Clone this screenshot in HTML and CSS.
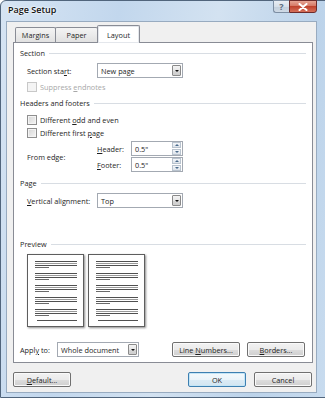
FILE: index.html
```html
<!DOCTYPE html>
<html lang="en">
<head>
    <meta charset="UTF-8">
    <title>Page Setup</title>
    <link rel="stylesheet" href="styles.css">
</head>
<body>
    <div class="window">
        <div class="titlebar">
            <span class="title">Page Setup</span>
            <div class="caption">
                <span class="cap-help">?</span>
                <span class="cap-close">
                    <svg width="10" height="8" viewBox="0 0 10 8"><path d="M1.5 1 L8.5 7 M8.5 1 L1.5 7" stroke="#fff" stroke-width="2" stroke-linecap="round"/></svg>
                </span>
            </div>
        </div>

        <div class="client">
            <div class="tabs">
                <div class="tab tab-margins">Margins</div>
                <div class="tab tab-paper">Paper</div>
                <div class="tab tab-layout active">Layout</div>
            </div>

            <div class="panel">
                <div class="group-title">Section</div>
                <div class="row row-start">
                    <span class="label">Section sta<u>r</u>t:</span>
                    <div class="combo combo-wide">
                        <span class="combo-text">New page</span>
                        <span class="combo-btn"><i class="arrow"></i></span>
                    </div>
                </div>
                <div class="row check-row row-suppress disabled">
                    <span class="check"></span>
                    <span>Suppress <u>e</u>ndnotes</span>
                </div>

                <div class="group-title gt-headers">Headers and footers</div>
                <div class="row check-row row-odd">
                    <span class="check"></span>
                    <span>Different <u>o</u>dd and even</span>
                </div>
                <div class="row check-row row-first">
                    <span class="check"></span>
                    <span>Different first <u>p</u>age</span>
                </div>
                <div class="edge">
                    <span class="label">From edge:</span>
                    <div class="edge-fields">
                        <div class="edge-row">
                            <span class="sublabel"><u>H</u>eader:</span>
                            <div class="spin">
                                <span class="spin-text">0.5"</span>
                                <span class="spin-btns"><i class="up"></i><i class="down"></i></span>
                            </div>
                        </div>
                        <div class="edge-row">
                            <span class="sublabel"><u>F</u>ooter:</span>
                            <div class="spin">
                                <span class="spin-text">0.5"</span>
                                <span class="spin-btns"><i class="up"></i><i class="down"></i></span>
                            </div>
                        </div>
                    </div>
                </div>

                <div class="group-title gt-page">Page</div>
                <div class="row row-valign">
                    <span class="label"><u>V</u>ertical alignment:</span>
                    <div class="combo combo-wide">
                        <span class="combo-text">Top</span>
                        <span class="combo-btn"><i class="arrow"></i></span>
                    </div>
                </div>

                <div class="group-title gt-preview">Preview</div>
                <div class="preview">
                    <div class="sheet">
                        <div class="para"><i></i><i class="lt"></i><i></i><i class="short"></i></div>
                        <div class="para"><i></i><i class="lt"></i><i></i><i class="short"></i></div>
                        <div class="para"><i></i><i class="lt"></i><i></i><i class="short"></i></div>
                        <div class="para"><i></i><i class="lt"></i><i></i><i class="short"></i></div>
                        <div class="para"><i></i><i class="lt"></i><i></i><i class="short"></i></div>
                        <div class="para last"><i></i></div>
                    </div>
                    <div class="sheet">
                        <div class="para"><i></i><i class="lt"></i><i></i><i class="short"></i></div>
                        <div class="para"><i></i><i class="lt"></i><i></i><i class="short"></i></div>
                        <div class="para"><i></i><i class="lt"></i><i></i><i class="short"></i></div>
                        <div class="para"><i></i><i class="lt"></i><i></i><i class="short"></i></div>
                        <div class="para"><i></i><i class="lt"></i><i></i><i class="short"></i></div>
                        <div class="para last"><i></i></div>
                    </div>
                </div>

                <div class="row row-apply">
                    <span class="label-apply">Appl<u>y</u> to:</span>
                    <div class="combo combo-apply">
                        <span class="combo-text">Whole document</span>
                        <span class="combo-btn"><i class="arrow"></i></span>
                    </div>
                    <button class="btn btn-lines"><span>Line <u>N</u>umbers...</span></button>
                    <button class="btn btn-borders"><span><u>B</u>orders...</span></button>
                </div>
            </div>

            <div class="footer">
                <button class="btn"><span><u>D</u>efault...</span></button>
                <span class="spacer"></span>
                <button class="btn btn-ok"><span>OK</span></button>
                <button class="btn"><span>Cancel</span></button>
            </div>
        </div>
    </div>
</body>
</html>
```

FILE: styles.css
```css
body {
    margin: 0;
    width: 325px;
    height: 400px;
    overflow: hidden;
    background-color: #ffffff;
    font-family: "Open Sans", "Liberation Sans", sans-serif;
    font-size: 7.3px;
    color: #1e1e1e;
}

u {
    text-decoration-thickness: 1px;
    text-underline-offset: 1px;
}

.window {
    width: 332px;
    height: 398px;
    box-sizing: border-box;
    border: 1px solid #51657c;
    border-radius: 6px 6px 0 0;
    padding-left: 5px;
    background: linear-gradient(100deg, #d6e4f3 0%, #c2d7ed 30%, #d3e2f1 55%, #bcd3ea 80%, #c9dcef 100%);
    display: flex;
    flex-direction: column;
}

/* title bar */

.titlebar {
    width: 311px;
    height: 20px;
    display: flex;
    justify-content: space-between;
    align-items: flex-start;
}

.title {
    padding: 3px 0 0 2px;
    font-size: 9px;
    font-weight: 600;
    line-height: 12px;
    color: #111;
    text-shadow: 0 0 3px #ffffff, 0 0 2px #ffffff;
}

.caption {
    display: flex;
    margin-top: -1px;
}

.cap-help {
    width: 16px;
    height: 13px;
    box-sizing: border-box;
    border: 1px solid #7d8ea3;
    border-right: none;
    border-radius: 0 0 0 3px;
    background: linear-gradient(#e9eef4 0%, #d6dfe9 50%, #c2cedb 51%, #cfdae6 100%);
    color: #5a6a7c;
    font-size: 9px;
    font-weight: bold;
    line-height: 11px;
    text-align: center;
}

.cap-close {
    width: 28px;
    height: 13px;
    box-sizing: border-box;
    border: 1px solid #6d2b2b;
    border-radius: 0 0 3px 0;
    background: linear-gradient(#e6a595 0%, #d67865 45%, #c0432e 50%, #d5705a 100%);
    display: flex;
    align-items: center;
    justify-content: center;
}

/* client area */

.client {
    width: 311px;
    height: 372px;
    box-sizing: border-box;
    border: 1px solid #98abc0;
    background-color: #f0f0f0;
    padding-top: 3px;
    display: flex;
    flex-direction: column;
}

.tabs {
    display: flex;
    align-items: flex-end;
    height: 17px;
    margin-left: 8px;
}

.tab {
    height: 15px;
    box-sizing: border-box;
    border: 1px solid #898c95;
    border-bottom: none;
    border-radius: 2px 2px 0 0;
    background: linear-gradient(#f4f4f4, #e1e1e1);
    display: flex;
    align-items: center;
    justify-content: center;
    margin-right: -1px;
}

.tab-margins { width: 41px; }
.tab-paper { width: 43px; }

.tab.active {
    width: 43px;
    height: 18px;
    margin-bottom: -1px;
    background: #ffffff;
    position: relative;
    z-index: 1;
    box-shadow: inset 0 0 0 1px #e4e7ec;
}

.panel {
    margin: 0 3px 0 6px;
    border: 1px solid #898c95;
    background-color: #ffffff;
    padding: 4px 6px 5px 6px;
}

.group-title {
    height: 12px;
    display: flex;
    align-items: center;
    gap: 4px;
}

.group-title::after {
    content: "";
    flex: 1;
    height: 1px;
    background-color: #d8dde3;
}

.gt-headers { margin-top: 5px; }
.gt-page { margin-top: 5px; }
.gt-preview { margin-top: 30px; }

.row {
    display: flex;
    align-items: center;
    padding-left: 7px;
}

.row-start { margin-top: 4px; height: 15px; }
.row-valign { margin-top: 4px; height: 15px; }

.label {
    width: 70px;
    flex-shrink: 0;
}

.check-row {
    height: 10px;
    gap: 3px;
}

.row-suppress { margin-top: 4px; }
.row-odd { margin-top: 6px; }
.row-first { margin-top: 3px; }

.check {
    width: 10px;
    height: 10px;
    box-sizing: border-box;
    border: 1px solid #8f8f8f;
    background: linear-gradient(135deg, #d4d4d4 0%, #f6f6f6 100%);
    box-shadow: inset 0 0 0 1px #f4f4f4;
}

.disabled {
    color: #a8a8a8;
}

.disabled .check {
    border-color: #c8c8c8;
    background: #f4f4f4;
    box-shadow: none;
}

/* combo boxes */

.combo {
    height: 15px;
    box-sizing: border-box;
    border: 1px solid #a3a9b2;
    background-color: #ffffff;
    display: flex;
}

.combo-wide { width: 86px; }
.combo-apply { width: 82px; }

.combo-text {
    flex: 1;
    padding-left: 3px;
    display: flex;
    align-items: center;
}

.combo-btn {
    width: 9px;
    margin: 1px;
    box-sizing: border-box;
    border: 1px solid #8a8a8a;
    border-radius: 1px;
    background: linear-gradient(#f3f3f3 0%, #e6e6e6 50%, #d6d6d6 51%, #cfcfcf 100%);
    display: flex;
    align-items: center;
    justify-content: center;
}

.arrow {
    width: 0;
    height: 0;
    border-left: 2px solid transparent;
    border-right: 2px solid transparent;
    border-top: 2px solid #111;
}

/* from edge */

.edge {
    margin-top: 3px;
    padding-left: 7px;
    display: flex;
    align-items: center;
}

.edge-fields {
    display: flex;
    flex-direction: column;
    gap: 1px;
}

.edge-row {
    display: flex;
    align-items: center;
    height: 15px;
}

.sublabel {
    width: 34px;
}

.spin {
    width: 52px;
    height: 15px;
    box-sizing: border-box;
    border: 1px solid #a3a9b2;
    background-color: #ffffff;
    display: flex;
}

.spin-text {
    flex: 1;
    padding-left: 3px;
    display: flex;
    align-items: center;
}

.spin-btns {
    width: 9px;
    display: flex;
    flex-direction: column;
    gap: 1px;
    padding: 0 1px 0 0;
}

.spin-btns i {
    flex: 1;
    border: 1px solid #b9c3ce;
    background: linear-gradient(#f4f6f9, #dde3ea);
    display: flex;
    align-items: center;
    justify-content: center;
}

.spin-btns .up::before,
.spin-btns .down::before {
    content: "";
    border-left: 2px solid transparent;
    border-right: 2px solid transparent;
}

.spin-btns .up::before { border-bottom: 2px solid #4a6b8c; }
.spin-btns .down::before { border-top: 2px solid #4a6b8c; }

/* preview */

.preview {
    margin-top: 4px;
    padding-left: 7px;
    display: flex;
    gap: 4px;
}

.sheet {
    width: 57px;
    height: 73px;
    box-sizing: border-box;
    border: 1px solid #5e5e5e;
    background-color: #ffffff;
    box-shadow: 1px 1px 2px rgba(0, 0, 0, 0.45);
    padding: 6px 6px 0 7px;
    display: flex;
    flex-direction: column;
    gap: 5px;
}

.para {
    display: flex;
    flex-direction: column;
    gap: 1px;
}

.para i {
    display: block;
    height: 1px;
    background-color: #505050;
}

.para i.lt {
    background-color: #9a9a9a;
}

.para i.short {
    width: 14px;
    background-color: #6a6a6a;
}

.para.last {
    margin-top: -1px;
    padding-left: 2px;
}

/* apply row */

.row-apply {
    margin-top: 15px;
    height: 15px;
    padding-left: 0;
}

.label-apply {
    width: 37px;
}

.btn {
    height: 15px;
    box-sizing: border-box;
    border: 1px solid #707070;
    border-radius: 2px;
    background: linear-gradient(#f2f2f2 0%, #ebebeb 50%, #dddddd 51%, #cfcfcf 100%);
    box-shadow: inset 0 0 0 1px #fafafa;
    font: inherit;
    color: #1e1e1e;
    padding: 0;
    display: flex;
    align-items: center;
    justify-content: center;
    width: 58px;
}

.btn-lines {
    width: 68px;
    margin-left: 33px;
}

.btn-borders {
    margin-left: 7px;
}

.footer {
    margin-top: 9px;
    padding: 0 4px 0 6px;
    display: flex;
    gap: 8px;
}

.spacer {
    flex: 1;
}

.btn-ok {
    border-color: #3c7fb1;
    background: linear-gradient(#f4f9fc 0%, #eaf4fa 50%, #dbebf5 51%, #d2e5f1 100%);
    box-shadow: inset 0 0 0 1px #c4e5f6;
}
```
